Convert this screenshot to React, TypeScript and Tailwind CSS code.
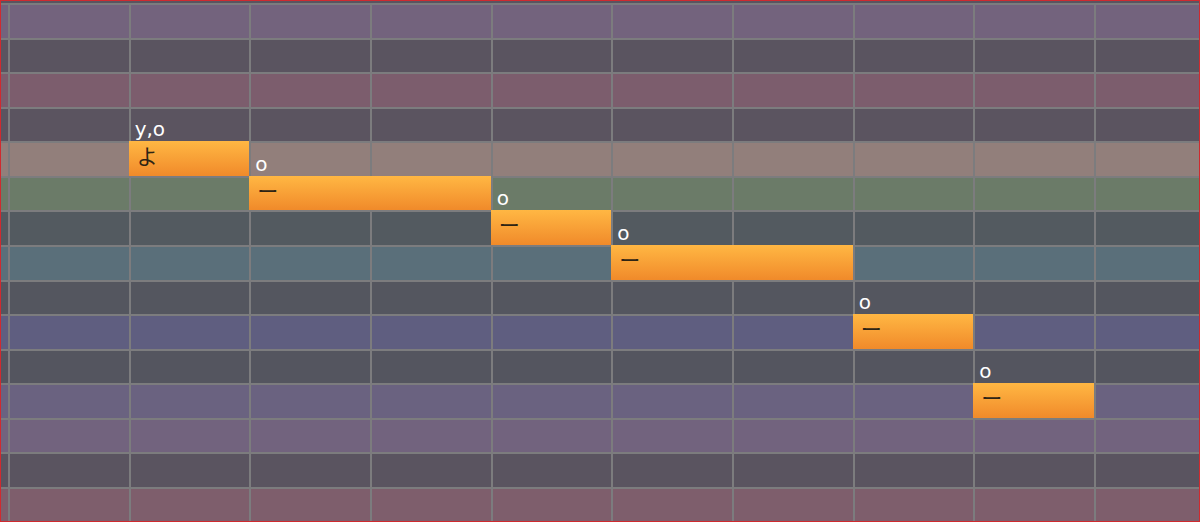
import React from "react";

// piano roll geometry
const ROW_H = 34.57;
const COL_W = 120.67;
const FIRST_LINE = 7; // x of the first beat line inside the frame
const TOP_LINE = 2; // y of the first key line inside the frame

const rows = [
  "bg-[#73637d]",
  "bg-[#5a5460]",
  "bg-[#7c5d6d]",
  "bg-[#5b5460]",
  "bg-[#927f7b]",
  "bg-[#6b7b68]",
  "bg-[#535a60]",
  "bg-[#5a6f7a]",
  "bg-[#54565f]",
  "bg-[#5f5e80]",
  "bg-[#54555f]",
  "bg-[#6a6280]",
  "bg-[#72637e]",
  "bg-[#5a5460]",
  "bg-[#7e5e6c]",
];

type Note = {
  row: number;
  col: number;
  len: number;
  lyric: string;
  phoneme: string;
};

const notes: Note[] = [
  { row: 4, col: 1, len: 1, lyric: "よ", phoneme: "y,o" },
  { row: 5, col: 2, len: 2, lyric: "ー", phoneme: "o" },
  { row: 6, col: 4, len: 1, lyric: "ー", phoneme: "o" },
  { row: 7, col: 5, len: 2, lyric: "ー", phoneme: "o" },
  { row: 9, col: 7, len: 1, lyric: "ー", phoneme: "o" },
  { row: 11, col: 8, len: 1, lyric: "ー", phoneme: "o" },
];

function KeyRow({ color }: { color: string }) {
  return (
    <div
      className={`flex border-t-2 border-[#7c7c7e] ${color}`}
      style={{ height: ROW_H }}
    >
      <div className="w-[7px] shrink-0" />
      {Array.from({ length: 9 }).map((_, i) => (
        <div
          key={i}
          className="shrink-0 border-l-2 border-[#7c7c7e]"
          style={{ width: COL_W }}
        />
      ))}
      <div className="flex-1 border-l-2 border-[#7c7c7e]" />
    </div>
  );
}

function NoteBlock({ note }: { note: Note }) {
  return (
    <div
      className="absolute bg-gradient-to-b from-[#ffb743] to-[#f08a2a]"
      style={{
        left: FIRST_LINE + note.col * COL_W,
        top: TOP_LINE + note.row * ROW_H,
        width: note.len * COL_W,
        height: ROW_H,
      }}
    >
      <span className="absolute bottom-full left-[6px] mb-[2px] text-[20px] leading-none text-white">
        {note.phoneme}
      </span>
      <span className="absolute left-[8px] top-[6px] text-[21px] leading-none text-[#2e2414]">
        {note.lyric}
      </span>
    </div>
  );
}

export default function App() {
  return (
    <div
      className="relative h-[522px] w-[1200px] overflow-hidden border border-[#cf2a2f] bg-[#5a5460]"
      style={{
        fontFamily: '"DejaVu Sans", "Noto Sans CJK JP", sans-serif',
      }}
    >
      <div className="h-[2px]" />
      {rows.map((c, i) => (
        <KeyRow key={i} color={c} />
      ))}
      {notes.map((n, i) => (
        <NoteBlock key={i} note={n} />
      ))}
    </div>
  );
}
